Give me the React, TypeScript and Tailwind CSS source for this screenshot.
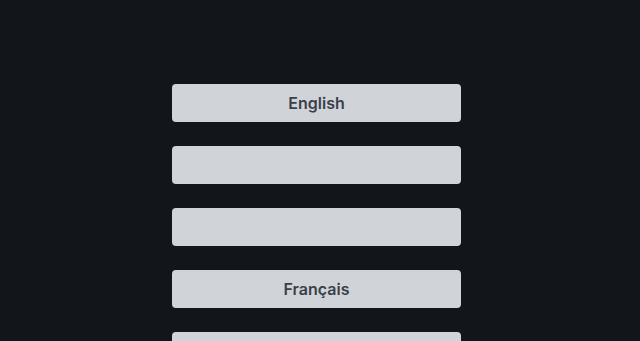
const LANGUAGES = [
  'English',
  '',
  '',
  'Français',
  'Deutsch',
  'Español',
  'Italiano',
  'Português',
  'Nederlands',
  'Polski',
  'Svenska',
  'Dansk',
  'Norsk',
  'Suomi',
  'Türkçe',
  'Čeština',
];

export default function App() {
  return (
    <div
      className="h-screen overflow-y-scroll bg-[#121519] [&::-webkit-scrollbar]:w-[15px] [&::-webkit-scrollbar-track]:bg-[#fafafa] [&::-webkit-scrollbar-thumb]:rounded-full [&::-webkit-scrollbar-thumb]:border-[4px] [&::-webkit-scrollbar-thumb]:border-solid [&::-webkit-scrollbar-thumb]:border-[#fafafa] [&::-webkit-scrollbar-thumb]:bg-[#8f8f8f]"
      style={{ fontFamily: 'Inter, "Noto Sans", sans-serif' }}
    >
      <div className="pt-[84px] pb-[40px] pl-[172px]">
        <div className="flex w-[289px] flex-col gap-6">
          {LANGUAGES.map((lang, i) => (
            <button
              key={i}
              className="h-[38px] w-full shrink-0 rounded-[4px] bg-[#d0d4d9] text-base font-semibold text-[#3b3f4a]"
            >
              {lang}
            </button>
          ))}
        </div>
      </div>
    </div>
  );
}
